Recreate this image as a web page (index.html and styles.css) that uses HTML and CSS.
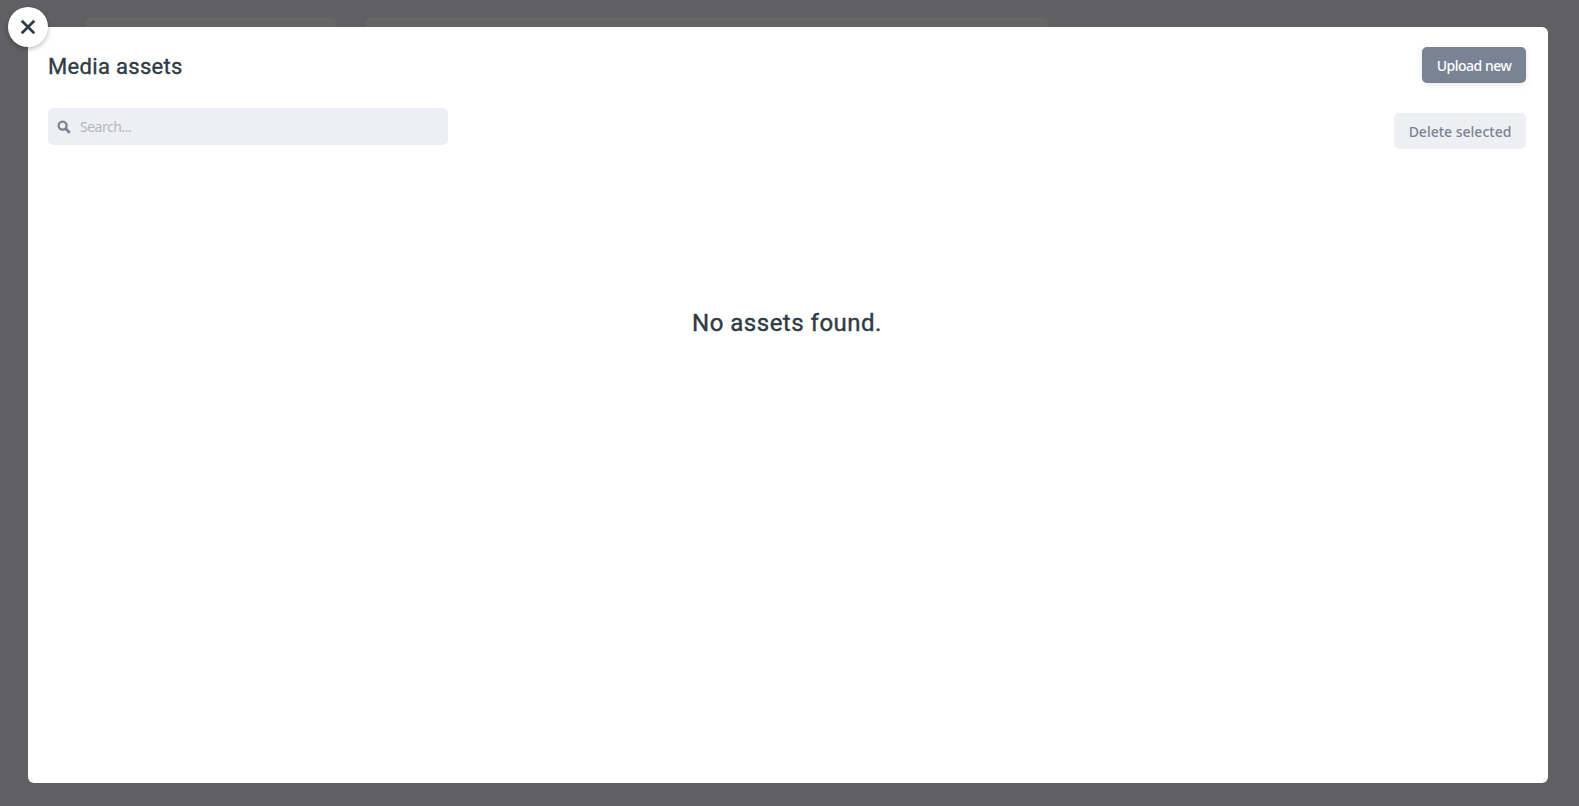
FILE: index.html
```html
<!DOCTYPE html>
<html lang="en">
<head>
  <meta charset="UTF-8">
  <meta name="viewport" content="width=device-width, initial-scale=1.0">
  <title>Media assets</title>
  <link rel="stylesheet" href="styles.css">
</head>
<body>
  <div class="page-behind">
    <div class="card card-side"></div>
    <div class="card card-main"></div>
  </div>

  <div class="modal-backdrop">
    <div class="modal">
      <button class="modal-close" aria-label="Close">
        <svg viewBox="0 0 16 16" width="16" height="16">
          <path d="M1.7 1.7l12.6 12.6M14.3 1.7l-12.6 12.6" fill="none" stroke="currentColor" stroke-width="2.7"/>
        </svg>
      </button>

      <div class="modal-header">
        <h2>Media assets</h2>
        <button class="btn btn-primary">Upload new</button>
      </div>

      <div class="toolbar">
        <div class="search">
          <svg viewBox="0 0 14 14" width="14" height="14">
            <circle cx="5.6" cy="5.6" r="4" fill="none" stroke="currentColor" stroke-width="2.3"/>
            <path d="M8.8 8.8l3.9 3.9" fill="none" stroke="currentColor" stroke-width="2.7"/>
          </svg>
          <input type="text" placeholder="Search...">
        </div>
        <button class="btn btn-muted">Delete selected</button>
      </div>

      <div class="empty">No assets found.</div>
    </div>
  </div>
</body>
</html>
```

FILE: styles.css
```css
* {
  box-sizing: border-box;
  margin: 0;
  padding: 0;
}

body {
  height: 100vh;
  overflow: hidden;
  background: #fff;
  font-family: 'Noto Sans', sans-serif;
  color: #2e3b44;
}

.page-behind {
  display: flex;
  gap: 30px;
  padding: 17px 0 0 86px;
  background: #606062;
  height: 100%;
}

.card {
  height: 200px;
  background: #666;
  border-radius: 6px;
}

.card-side {
  width: 250px;
}

.card-main {
  width: 682px;
}

.modal-backdrop {
  position: absolute;
  top: 0;
  left: 0;
  right: 0;
  bottom: 0;
  padding: 27px 31px 23px 28px;
}

.modal {
  position: relative;
  height: 100%;
  background: #fff;
  border-radius: 6px;
  padding: 20px 22px 20px 20px;
}

.modal-close {
  position: absolute;
  top: -20px;
  left: -20px;
  width: 40px;
  height: 40px;
  display: flex;
  align-items: center;
  justify-content: center;
  border: none;
  border-radius: 50%;
  background: #fff;
  color: #2e3b44;
  box-shadow: 0 2px 5px rgba(0, 0, 0, 0.25);
}

.modal-header {
  display: flex;
  justify-content: space-between;
  align-items: center;
  height: 36px;
}

.modal-header h2 {
  padding-top: 2px;
  font-family: 'Roboto', sans-serif;
  font-size: 22px;
  font-weight: 400;
  letter-spacing: 0.32px;
  -webkit-text-stroke: 0.35px currentColor;
}

.btn {
  height: 36px;
  border: none;
  border-radius: 5px;
  font-family: 'Noto Sans', sans-serif;
  font-size: 14px;
  font-weight: 500;
}

.btn-primary {
  width: 104px;
  background: #7a8394;
  color: #fff;
  letter-spacing: -0.5px;
  box-shadow: 0 2px 6px rgba(0, 0, 0, 0.1);
}

.btn-muted {
  width: 132px;
  background: #eeeff3;
  color: #7a8394;
  margin-top: 5px;
}

.toolbar {
  display: flex;
  justify-content: space-between;
  align-items: flex-start;
  margin-top: 25px;
}

.search {
  display: flex;
  align-items: center;
  gap: 9px;
  width: 400px;
  height: 37px;
  padding-left: 9px;
  background: #eeeff3;
  border-radius: 5px;
  color: #7a8394;
}

.search input {
  flex: 1;
  border: none;
  outline: none;
  background: transparent;
  font-family: 'Noto Sans', sans-serif;
  font-size: 14px;
  letter-spacing: -0.5px;
}

.search input::placeholder {
  color: #b5b7bb;
}

.empty {
  margin-top: 160px;
  text-align: center;
  font-family: 'Roboto', sans-serif;
  font-size: 24px;
  font-weight: 400;
  letter-spacing: 0.5px;
  -webkit-text-stroke: 0.4px currentColor;
}
```
